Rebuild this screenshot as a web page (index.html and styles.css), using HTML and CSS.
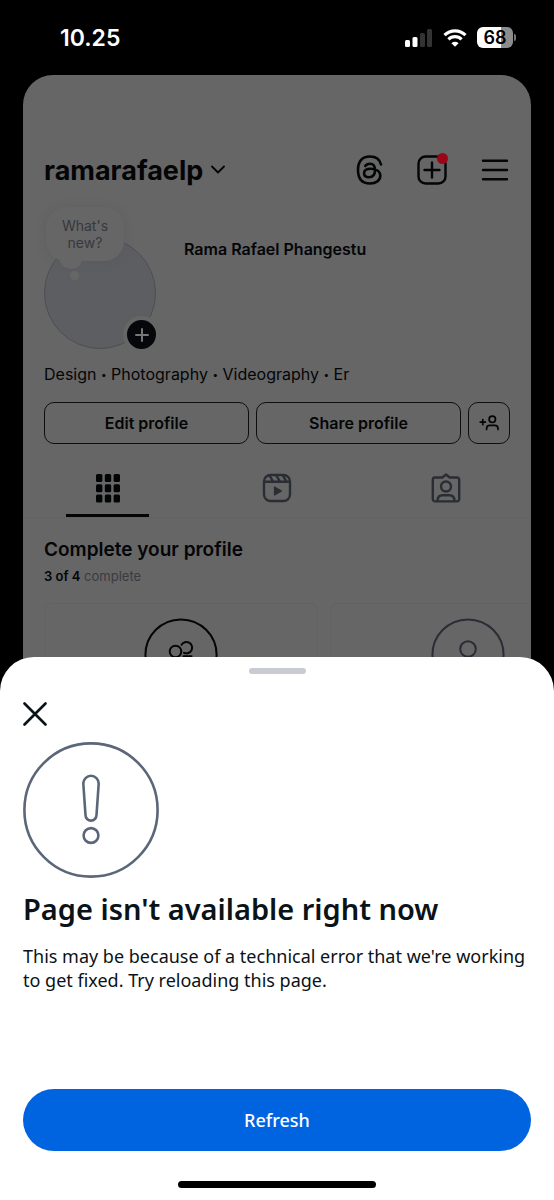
FILE: index.html
```html
<!DOCTYPE html>
<html lang="en">
<head>
<meta charset="utf-8">
<meta name="viewport" content="width=device-width, initial-scale=1">
<title>Profile</title>
<link rel="stylesheet" href="styles.css">
</head>
<body>
<div class="phone">
  <header class="status">
    <span class="clock">10.25</span>
    <div class="status-icons">
      <svg width="28" height="20" viewBox="0 0 28 20" aria-label="Signal">
        <rect x="0" y="12" width="5" height="7" rx="1.500" fill="#fff"/>
        <rect x="7.500" y="9" width="5" height="10" rx="1.500" fill="#fff"/>
        <rect x="15" y="5" width="5" height="14" rx="1.500" fill="#333"/>
        <rect x="22" y="1" width="5" height="18" rx="1.500" fill="#333"/>
      </svg>
      <svg width="24" height="20" viewBox="0 0 24 20" fill="none" stroke="#fff" stroke-width="3.200" aria-label="Wi-Fi">
        <path d="M1.500 7.200a15 15 0 0 1 21 0"/>
        <path d="M5.400 11.300a9.500 9.500 0 0 1 13.200 0"/>
        <path d="M12 18.800l-3.600-3.600a5.200 5.200 0 0 1 7.200 0z" fill="#fff" stroke="none"/>
      </svg>
      <div class="battery"><span class="battery-body">68</span><span class="battery-tip"></span></div>
    </div>
  </header>

  <main class="profile">
    <div class="topbar">
      <button class="account">ramarafaelp
        <svg width="14" height="10" viewBox="0 0 14 10" fill="none" stroke="currentColor" stroke-width="1.800" stroke-linecap="round" stroke-linejoin="round"><path d="M1 1.500l6 6 6-6"/></svg>
      </button>
      <div class="actions">
        <button class="icon-button" aria-label="Threads">
          <svg width="30" height="30" viewBox="0 0 30 30" fill="none" stroke="currentColor" stroke-width="2.600" stroke-linecap="round" stroke-linejoin="round">
            <path d="M27 9.500C25.700 4.100 21.800 1.500 16 1.500 7.800 1.500 4 6.600 4 15S7.800 28.500 16 28.500c6 0 10.300-3.200 10.300-7.700 0-4.600-4.500-7-9.600-7-4.200 0-6.600 1.700-6.600 4.400 0 2.500 2.100 4 5 4 3.700 0 5.900-2.400 5.900-7.100 0-4.400-1.700-6.400-5-6.400-2.100 0-3.700.8-4.700 2.300"/>
          </svg>
        </button>
        <button class="icon-button" aria-label="Create">
          <svg width="30" height="30" viewBox="0 0 30 30" fill="none" stroke="currentColor" stroke-width="2.400" stroke-linecap="round"><rect x="1.500" y="1.500" width="27" height="27" rx="7"/><path d="M15 7.500v15M7.500 15h15"/></svg>
          <span class="dot"></span>
        </button>
        <button class="icon-button" aria-label="Menu">
          <svg width="30" height="30" viewBox="0 0 30 30" fill="none" stroke="currentColor" stroke-width="2.400" stroke-linecap="round"><path d="M3 5.700h24M3 15h24M3 24.300h24"/></svg>
        </button>
      </div>
    </div>

    <section class="identity">
      <div class="avatar">
        <span class="note">What's<br>new?</span>
        <span class="note-tail"></span>
        <span class="note-drop"></span>
        <button class="add-story" aria-label="Add story"><svg width="14" height="14" viewBox="0 0 14 14" fill="none" stroke="currentColor" stroke-width="2" stroke-linecap="round"><path d="M7 1v12M1 7h12"/></svg></button>
      </div>
      <h2 class="name">Rama Rafael Phangestu</h2>
    </section>
    <p class="bio">Design <span class="bullet">•</span> Photography <span class="bullet">•</span> Videography <span class="bullet">•</span> Er</p>

    <div class="profile-buttons">
      <button class="outline grow">Edit profile</button>
      <button class="outline grow">Share profile</button>
      <button class="outline square" aria-label="Discover people">
        <svg width="20" height="16" viewBox="0 0 20 16" fill="none" stroke="currentColor" stroke-width="1.700" stroke-linecap="round"><circle cx="13.300" cy="4.300" r="3.200"/><path d="M7.600 14.500v-.9c0-2 1.400-3.200 3.200-3.200h5c1.800 0 3.200 1.200 3.200 3.200v.9M3.800 4.500v5.200M1.200 7.100h5.200"/></svg>
      </button>
    </div>

    <nav class="tabs">
      <button class="tab active" aria-label="Posts">
        <svg width="30" height="30" viewBox="0 0 30 30" fill="currentColor">
          <rect x="3" y="1" width="6.400" height="8" rx="1.500"/><rect x="11.800" y="1" width="6.400" height="8" rx="1.500"/><rect x="20.600" y="1" width="6.400" height="8" rx="1.500"/>
          <rect x="3" y="11.200" width="6.400" height="8" rx="1.500"/><rect x="11.800" y="11.200" width="6.400" height="8" rx="1.500"/><rect x="20.600" y="11.200" width="6.400" height="8" rx="1.500"/>
          <rect x="3" y="21.600" width="6.400" height="8" rx="1.500"/><rect x="11.800" y="21.600" width="6.400" height="8" rx="1.500"/><rect x="20.600" y="21.600" width="6.400" height="8" rx="1.500"/>
        </svg>
      </button>
      <button class="tab" aria-label="Reels">
        <svg width="30" height="30" viewBox="0 0 30 30" fill="none" stroke="currentColor" stroke-width="2.400" stroke-linejoin="round"><rect x="2" y="2" width="26" height="26" rx="6.500"/><path d="M2 8.700h26M7.500 2.500l3.700 6.200M14 2l4 6.700M20.500 2l3.700 6.200"/><path d="M12.500 14v8l7-4z" fill="currentColor" stroke-width="1.200"/></svg>
      </button>
      <button class="tab" aria-label="Tagged">
        <svg width="30" height="30" viewBox="0 0 30 30" fill="none" stroke="currentColor" stroke-width="2.400" stroke-linejoin="round"><path d="M4 4.500h7.300L15 1.500l3.700 3H26a2.200 2.200 0 0 1 2.200 2.200v19.500a2.200 2.200 0 0 1-2.200 2.200H4a2.200 2.200 0 0 1-2.200-2.200V6.700A2.200 2.200 0 0 1 4 4.500z"/><circle cx="15" cy="13.500" r="5"/><path d="M6.500 28c0-3.500 1.900-5.700 5-5.700h7c3.100 0 5 2.200 5 5.700"/></svg>
      </button>
    </nav>

    <section class="complete">
      <h3 class="complete-title">Complete your profile</h3>
      <p class="progress"><strong>3 of 4</strong> complete</p>
      <div class="tasks">
        <div class="task">
          <svg width="74" height="74" viewBox="0 0 74 74" fill="none" stroke="currentColor" stroke-width="2" stroke-linecap="round"><circle cx="37" cy="37" r="35.600"/><circle cx="31.500" cy="33.500" r="5.800"/><path d="M37.500 26.800a5.700 5.700 0 1 1 2.500 8M39.500 38.300h8M20 51c0-5 3-8 8-8h7c5 0 8 3 8 8"/></svg>
        </div>
        <div class="task muted">
          <svg width="74" height="74" viewBox="0 0 74 74" fill="none" stroke="currentColor" stroke-width="2"><circle cx="37" cy="37" r="35.600"/><circle cx="37" cy="31" r="7.800"/><path d="M22 52c0-6 3-9 9-9h12c6 0 9 3 9 9"/></svg>
        </div>
      </div>
    </section>
  </main>

  <section class="sheet" role="dialog" aria-labelledby="sheet-title">
    <span class="handle"></span>
    <button class="close" aria-label="Close"><svg width="24" height="24" viewBox="0 0 24 24" fill="none" stroke="currentColor" stroke-width="2.600" stroke-linecap="round"><path d="M1.500 1.500l21 21M22.500 1.500l-21 21"/></svg></button>
    <svg class="warning" width="136" height="136" viewBox="0 0 136 136" fill="none" stroke="#5b6778" stroke-width="2.600"><circle cx="68" cy="68" r="66.600"/><path d="M60.300 41.500a7.700 7.700 0 0 1 15.400 0l-2.200 31.600a5.500 5.500 0 0 1-11 0z"/><circle cx="68" cy="93.500" r="7.400"/></svg>
    <h1 id="sheet-title" class="sheet-title">Page isn't available right now</h1>
    <p class="sheet-text">This may be because of a technical error that we're working to get fixed. Try reloading this page.</p>
    <button class="refresh">Refresh</button>
    <span class="home-bar"></span>
  </section>
</div>
</body>
</html>
```

FILE: styles.css
```css
* { box-sizing: border-box; }

body {
  margin: 0;
  background: #000;
  color: #040507;
  font-family: Inter, "Liberation Sans", sans-serif;
}

h1, h2, h3, p { margin: 0; }

button {
  padding: 0;
  border: 0;
  background: none;
  color: inherit;
  font: inherit;
  cursor: pointer;
}

svg { display: block; flex: none; }

.phone {
  position: relative;
  display: flex;
  flex-direction: column;
  height: 100vh;
  overflow: hidden;
}

/* Status bar */
.status {
  display: flex;
  align-items: center;
  justify-content: space-between;
  flex: none;
  height: 75px;
  padding: 0 38px 0 60px;
  color: #fff;
}

.clock { font-size: 23px; font-weight: 600; }

.status-icons { display: flex; align-items: center; gap: 10px; }

.battery { display: flex; align-items: center; gap: 1px; }

.battery-body {
  width: 36px;
  border-radius: 6px;
  background: linear-gradient(90deg, #fff 68%, #8c8c8c 68%);
  color: #000;
  font-size: 18px;
  font-weight: 600;
  line-height: 21px;
  text-align: center;
}

.battery-tip { width: 2px; height: 7px; border-radius: 0 2px 2px 0; background: #777; }

/* Dimmed profile */
.profile {
  flex: 1;
  margin: 0 23px;
  padding-top: 71px;
  border-radius: 30px 30px 0 0;
  background: #666;
  overflow: hidden;
}

.topbar {
  display: flex;
  align-items: center;
  justify-content: space-between;
  height: 48px;
  padding: 0 21px;
}

.account {
  display: flex;
  align-items: center;
  gap: 8px;
  font-size: 27px;
  font-weight: 700;
}

.actions { display: flex; gap: 33px; }

.icon-button { position: relative; }

.dot {
  position: absolute;
  top: -2px;
  right: -1px;
  width: 11px;
  height: 11px;
  border-radius: 50%;
  background: #9c0418;
}

.identity { display: flex; gap: 28px; padding: 43px 21px 0; }

.avatar {
  position: relative;
  width: 112px;
  height: 112px;
  border: 1px solid #4d4f52;
  border-radius: 50%;
  background: #5c5e61;
}

.note {
  position: absolute;
  top: -31px;
  left: 1px;
  width: 78px;
  padding: 10px 0;
  border-radius: 20px;
  background: #666;
  box-shadow: 0 1px 8px #55565a66;
  color: #37383e;
  font-size: 14px;
  line-height: 17px;
  text-align: center;
}

.note-tail, .note-drop { position: absolute; border-radius: 50%; background: #666; }
.note-tail { top: 11px; left: 15px; width: 22px; height: 20px; }
.note-drop { top: 33px; left: 25px; width: 9px; height: 9px; }

.add-story {
  position: absolute;
  right: -5px;
  bottom: -5px;
  display: grid;
  place-items: center;
  width: 37px;
  height: 37px;
  border: 4px solid #666;
  border-radius: 50%;
  background: #05070a;
  color: #777;
}

.name { font-size: 16px; font-weight: 600; line-height: 24px; }

.bio { padding: 15px 21px 0; font-size: 16px; line-height: 20px; }

.bullet { font-size: 10px; line-height: 10px; vertical-align: 2px; }

.profile-buttons { display: flex; gap: 7px; padding: 18px 21px 0; }

.outline {
  display: grid;
  place-items: center;
  height: 42px;
  border: 1px solid #0c0e11;
  border-radius: 10px;
  font-size: 16px;
  font-weight: 600;
}

.grow { flex: 1; }
.square { width: 42px; }

.tabs {
  display: flex;
  height: 74px;
  border-bottom: 1px solid #616264;
  color: #2b2d34;
}

.tab {
  position: relative;
  display: flex;
  flex: 1;
  justify-content: center;
  padding-top: 29px;
}

.active { color: #040507; }

.active::after {
  content: "";
  position: absolute;
  bottom: 0;
  width: 83px;
  height: 3px;
  background: #040507;
}

.complete { padding: 20px 0 0 21px; }
.complete-title { font-size: 19px; font-weight: 600; line-height: 24px; }
.progress { padding-top: 4px; color: #3a3b41; font-size: 13px; line-height: 20px; }
.progress strong { color: #040507; font-weight: 600; }

.tasks { display: flex; gap: 14px; padding-top: 17px; }

.task {
  display: flex;
  flex: none;
  justify-content: center;
  width: 273px;
  height: 240px;
  padding-top: 14px;
  border: 1px solid #626264;
  border-radius: 6px;
}

.muted { color: #2b2d34; }

/* Error sheet */
.sheet {
  position: absolute;
  right: 0;
  bottom: 0;
  left: 0;
  display: flex;
  flex-direction: column;
  align-items: flex-start;
  padding: 11px 23px 12px;
  border-radius: 34px 34px 0 0;
  background: #fff;
  color: #0a1317;
  font-family: "Noto Sans", "Liberation Sans", sans-serif;
}

.handle {
  align-self: center;
  width: 57px;
  height: 6px;
  border-radius: 3px;
  background: #c8ccd2;
}

.close { margin-top: 28px; }
.warning { margin-top: 16px; }

.sheet-title { margin-top: 11px; font-size: 29px; font-weight: 600; line-height: 40px; }

.sheet-text { margin-top: 15px; font-size: 18px; line-height: 24px; }

.refresh {
  align-self: stretch;
  height: 62px;
  margin-top: 97px;
  border-radius: 31px;
  background: #0064e0;
  color: #fff;
  font-size: 18px;
  font-weight: 500;
}

.home-bar {
  align-self: center;
  width: 198px;
  height: 7px;
  margin-top: 30px;
  border-radius: 4px;
  background: #000;
}
```
